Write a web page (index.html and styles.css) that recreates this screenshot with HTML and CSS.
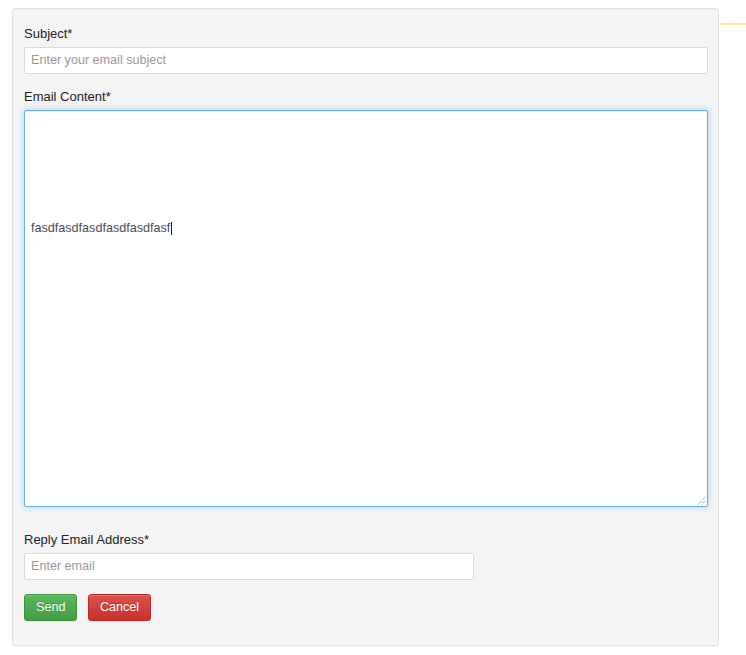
FILE: index.html
```html
<!DOCTYPE html>
<html lang="en">
<head>
<meta charset="utf-8">
<title>Email form</title>
<link rel="stylesheet" href="styles.css">
</head>
<body>
<div class="accent-line"></div>
<form class="well">
  <div class="form-group">
    <label class="label">Subject*</label>
    <div class="input input-full"><span class="placeholder">Enter your email subject</span></div>
  </div>
  <div class="form-group group-textarea">
    <label class="label">Email Content*</label>
    <div class="textarea">
      <p class="content">fasdfasdfasdfasdfasdfasf<span class="caret"></span></p>
      <svg class="grip" width="9" height="9" viewBox="0 0 9 9">
        <line x1="1" y1="8.5" x2="8.5" y2="1" stroke="#777" stroke-width="1" stroke-dasharray="1 1"/>
        <line x1="4.5" y1="8.5" x2="8.5" y2="4.5" stroke="#777" stroke-width="1" stroke-dasharray="1 1"/>
      </svg>
    </div>
  </div>
  <div class="form-group">
    <label class="label">Reply Email Address*</label>
    <div class="input input-half"><span class="placeholder">Enter email</span></div>
  </div>
  <div class="actions">
    <button type="button" class="btn btn-success">Send</button>
    <button type="button" class="btn btn-danger">Cancel</button>
  </div>
</form>
</body>
</html>
```
FILE: styles.css
```css
* { box-sizing: border-box; }
html, body { margin: 0; padding: 0; background: #fff; }
body {
  font-family: "Liberation Sans", Arial, Helvetica, sans-serif;
  color: #222;
  position: relative;
  width: 746px;
  height: 655px;
  overflow: hidden;
}
.accent-line {
  position: absolute;
  left: 720px;
  top: 23px;
  width: 26px;
  height: 2px;
  background: #fde9a6;
}
.well {
  margin: 8px 0 0 12px;
  width: 707px;
  padding: 16px 10px 24px 11px;
  background: #f4f4f4;
  border: 1px solid #e0e0e0;
  border-radius: 3px;
  box-shadow: inset 0 1px 1px rgba(0,0,0,.03), 0 1px 1px rgba(0,0,0,.04);
}
.form-group { margin-bottom: 14px; }
.group-textarea { margin-bottom: 24px; }
.label {
  display: block;
  font-size: 13px;
  line-height: 18px;
  margin-bottom: 4px;
  color: #222;
}
.input {
  height: 27px;
  background: #fff;
  border: 1px solid #dadada;
  border-radius: 2px;
  padding: 0 6px;
  font-size: 12.6px;
  line-height: 25px;
}
.input-full { width: 684px; }
.input-half { width: 450px; }
.placeholder { color: #999; }
.textarea {
  position: relative;
  width: 684px;
  height: 397px;
  background: #fff;
  border: 1px solid #66afe9;
  border-radius: 2px;
  box-shadow: inset 0 1px 1px rgba(0,0,0,.075), 0 0 6px rgba(102,175,233,.55);
  padding: 108px 6px 6px;
}
.content {
  margin: 0;
  font-size: 12.6px;
  line-height: 18px;
  color: #4a4f57;
}
.caret {
  display: inline-block;
  width: 1px;
  height: 13px;
  background: #222;
  vertical-align: -3px;
  margin-left: 1px;
}
.grip {
  position: absolute;
  right: 1px;
  bottom: 1px;
}
.actions {
  display: flex;
  gap: 10.5px;
}
.btn {
  height: 27px;
  padding: 0 11px;
  font-family: "Liberation Sans", Arial, Helvetica, sans-serif;
  font-size: 12.6px;
  line-height: 25px;
  color: #fff;
  border-radius: 3px;
  border: 1px solid transparent;
  text-shadow: 0 -1px 0 rgba(0,0,0,.2);
  box-shadow: inset 0 1px 0 rgba(255,255,255,.15), 0 1px 1px rgba(0,0,0,.075);
  cursor: pointer;
}
.btn-success {
  background-image: linear-gradient(to bottom, #5cb85c 0%, #449d44 100%);
  border-color: #3e8f3e;
}
.btn-danger {
  background-image: linear-gradient(to bottom, #d9534f 0%, #c9302c 100%);
  border-color: #b92c28;
}
```
